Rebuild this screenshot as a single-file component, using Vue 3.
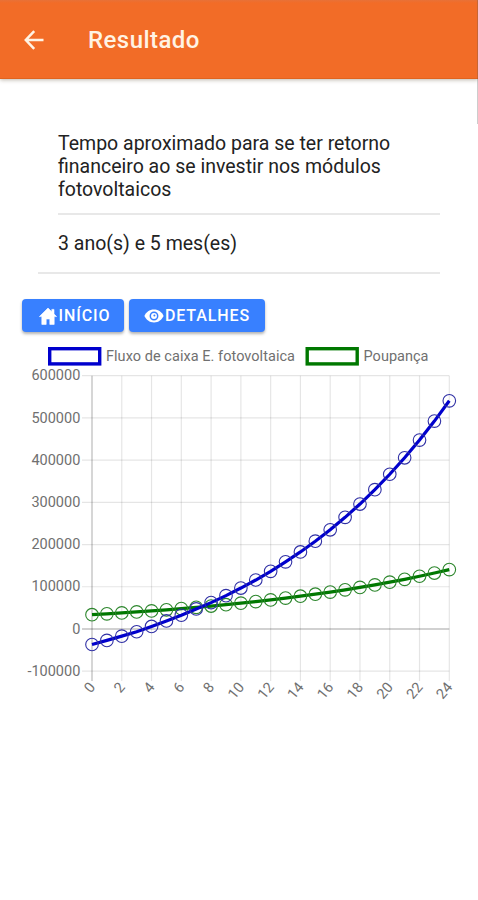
<template>
  <div class="page">
    <header class="toolbar">
      <button class="back" aria-label="Voltar">
        <svg width="20" height="20" viewBox="0 0 20 20">
          <path d="M10.2 1.2 L1.8 10 L10.2 18.8 M1.8 10 H19.5" fill="none" stroke="#fff3e4" stroke-width="2.5" />
        </svg>
      </button>
      <h1>Resultado</h1>
    </header>

    <main>
      <div class="list">
        <div class="item first">
          <p>Tempo aproximado para se ter retorno<br>financeiro ao se investir nos módulos<br>fotovoltaicos</p>
        </div>
        <div class="item last">
          <p>3 ano(s) e 5 mes(es)</p>
        </div>
      </div>

      <div class="buttons">
        <button class="btn home">
          <svg width="20" height="20" viewBox="0 0 20 20">
            <path d="M10 2 L1.4 10.6 H3.8 V18.4 H8.2 V13 H11.8 V18.4 H16.2 V10.6 H18.6 L16 8 V3.4 H13.8 V5.8 Z" fill="#fff" stroke="#fff" stroke-width="0.6" stroke-linejoin="round" />
          </svg>
          <span>INÍCIO</span>
        </button>
        <button class="btn details">
          <svg width="20" height="20" viewBox="0 0 20 20">
            <path d="M10 3.6 C5.4 3.6 2.2 6.2 0.4 10 C2.2 13.8 5.4 16.4 10 16.4 C14.6 16.4 17.8 13.8 19.6 10 C17.8 6.2 14.6 3.6 10 3.6 Z" fill="#fff" />
            <circle cx="10" cy="10" r="3.7" fill="none" stroke="#3880ff" stroke-width="1.5" />
            <circle cx="10.4" cy="9.6" r="1" fill="#3880ff" />
          </svg>
          <span>DETALHES</span>
        </button>
      </div>

      <svg class="chart" width="478" height="380" viewBox="0 0 478 380">
        <g class="legend">
          <rect x="49.7" y="8.7" width="50" height="15.2" stroke="#0000cd" />
          <text x="106" y="21" textLength="189">Fluxo de caixa E. fotovoltaica</text>
          <rect x="307.2" y="8.7" width="50" height="15.2" stroke="#007800" />
          <text x="363.5" y="21" textLength="65">Poupança</text>
        </g>

        <g v-for="t in yTicks" :key="'y' + t">
          <line x1="82" :x2="right" :y1="yPos(t)" :y2="yPos(t)" :class="t === 0 ? 'zero' : 'grid'" />
          <text x="80.3" :y="yPos(t) + 4.7" text-anchor="end">{{ t }}</text>
        </g>
        <g v-for="t in xTicks" :key="'x' + t">
          <line :x1="xPos(t)" :x2="xPos(t)" :y1="top" y2="341" :class="t === 0 ? 'zero' : 'grid'" />
          <text text-anchor="end" :transform="`translate(${xPos(t) + 4} 347.5) rotate(-50)`">{{ t }}</text>
        </g>

        <g v-for="s in series" :key="s.color" fill="none" :stroke="s.color">
          <polyline :points="points(s.data)" stroke-width="3.2" />
          <circle v-for="(v, i) in s.data" :key="i" :cx="xPos(i)" :cy="yPos(v)" r="6.3" :stroke="s.ring" stroke-width="1.1" />
        </g>
      </svg>
    </main>
    <div class="scrollbar"></div>
  </div>
</template>

<script setup>
const left = 92
const right = 449.3
const top = 35.7
const bottom = 331.2

const yTicks = [600000, 500000, 400000, 300000, 200000, 100000, 0, -100000]
const xTicks = Array.from({ length: 13 }, (_, i) => i * 2)

const poupanca = Array.from({ length: 25 }, (_, i) => 33800 * Math.pow(1.0612, i))
const fluxo = [
  -36800, -27000, -17000, -6500, 6000, 19000, 32500, 47500, 62500,
  79000, 97000, 116000, 136500, 159000, 182500, 208000, 235000, 264500,
  296000, 330000, 366500, 405500, 447500, 492500, 540500
]

const series = [
  { color: '#007800', ring: '#2c862c', data: poupanca },
  { color: '#0000cd', ring: '#3030a5', data: fluxo }
]

function xPos(n) {
  return left + (n * (right - left)) / 24
}

function yPos(v) {
  return top + ((600000 - v) * (bottom - top)) / 700000
}

function points(data) {
  return data.map((v, i) => `${xPos(i)},${yPos(v)}`).join(' ')
}
</script>

<style>
body {
  margin: 0;
  background: #fff;
}
</style>

<style scoped>
.page {
  position: relative;
  width: 478px;
  height: 900px;
  overflow: hidden;
  background: #fff;
  font-family: Roboto, "Liberation Sans", sans-serif;
}

.toolbar {
  height: 79px;
  display: flex;
  align-items: center;
  padding: 2px 0 0 24px;
  box-sizing: border-box;
  background: linear-gradient(#e87137, #f26c27 3px);
  border-bottom: 1px solid #e0641f;
  box-shadow: 0 1px 4px rgba(70, 50, 20, 0.35);
}

.back {
  display: flex;
  padding: 0;
  border: 0;
  background: none;
}

h1 {
  margin: 0 0 0 44px;
  color: #fff3e4;
  font-size: 24px;
  font-weight: 500;
  letter-spacing: 0.45px;
}

.list {
  padding: 53px 38px 0;
  color: #222;
  font-size: 19.5px;
  line-height: 23px;
}

.item {
  border-bottom: 2px solid #e8e8e8;
}

.item p {
  margin: 0;
  white-space: nowrap;
}

.first {
  margin-left: 20px;
  padding-bottom: 12px;
}

.last {
  padding: 17px 0 17px 20px;
}

.buttons {
  display: flex;
  gap: 5px;
  padding: 25px 22px 0;
}

.btn {
  display: flex;
  align-items: center;
  justify-content: center;
  height: 33px;
  padding: 0;
  border: 0;
  border-radius: 4px;
  background: #3880ff;
  box-shadow: 0 2px 3px rgba(0, 0, 0, 0.3);
  color: #fff;
  font-family: inherit;
  font-size: 16px;
  font-weight: 500;
  letter-spacing: 0.9px;
}

.btn span {
  margin-left: 1px;
}

.home {
  width: 102px;
  padding-left: 2px;
}

.details {
  width: 136px;
}

.chart {
  display: block;
  margin-top: 8px;
}

.chart text {
  fill: #707070;
  font-size: 14.5px;
}

.legend rect {
  fill: #fff;
  stroke-width: 3.4;
}

.grid {
  stroke: rgba(0, 0, 0, 0.1);
  stroke-width: 1.2;
}

.zero {
  stroke: rgba(0, 0, 0, 0.18);
  stroke-width: 1.8;
}

.scrollbar {
  position: absolute;
  top: 0;
  right: 0;
  width: 1px;
  height: 124px;
  background: rgba(90, 90, 90, 0.3);
}
</style>
